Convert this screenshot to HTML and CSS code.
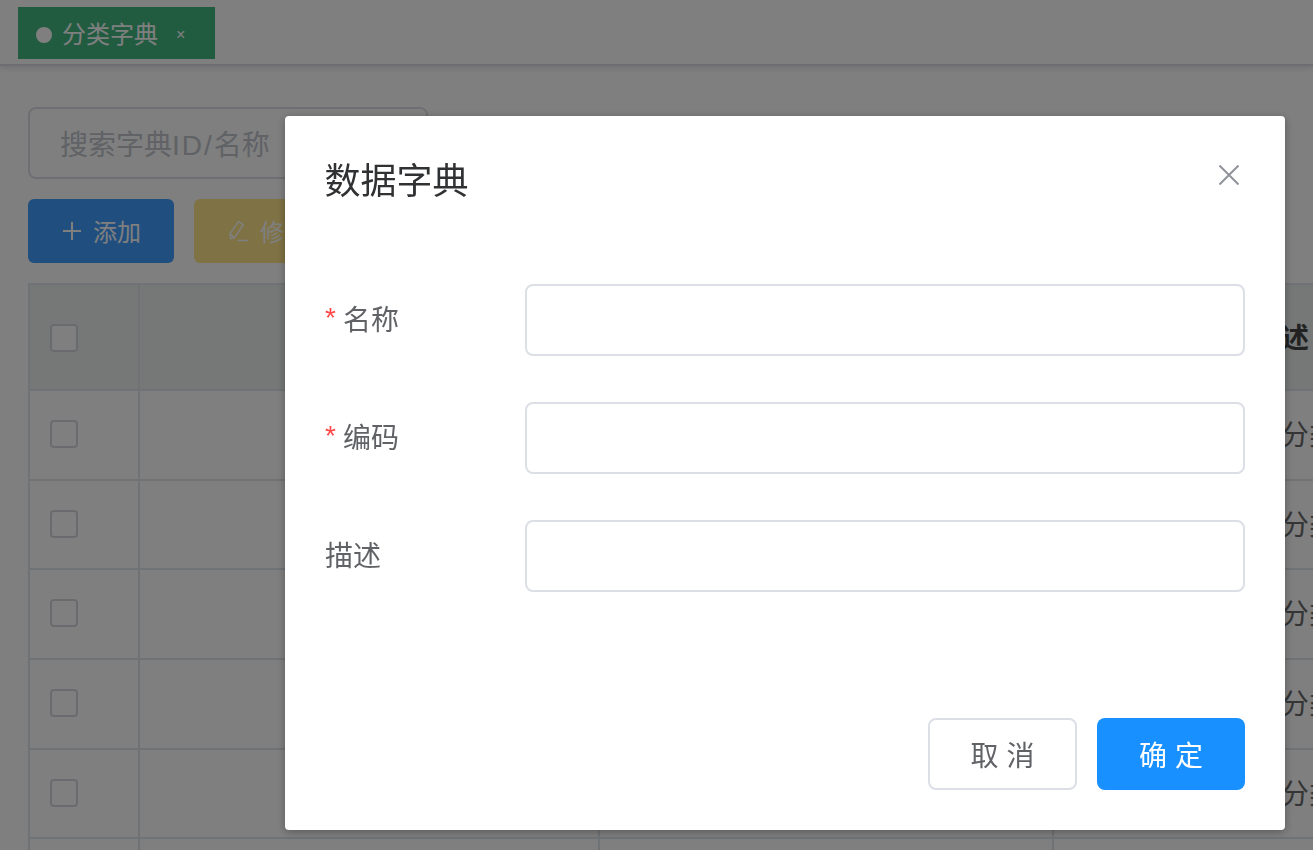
FILE: index.html
```html
<!DOCTYPE html>
<html lang="zh">
<head>
<meta charset="utf-8">
<title>分类字典</title>
<link rel="stylesheet" href="styles.css">
</head>
<body>
<div class="page">
  <header class="tags">
    <div class="tag"><span class="dot"></span><span class="tag-name">分类字典</span><span class="tag-x">×</span></div>
  </header>
  <main class="content">
    <div class="search">搜索字典<span class="latin">ID/</span>名称</div>
    <div class="toolbar">
      <div class="btn btn-add">
        <svg class="ico" viewBox="0 0 20 20"><path d="M10 1v18M1 10h18" fill="none" stroke="currentColor" stroke-width="2"/></svg>
        <span>添加</span>
      </div>
      <div class="btn btn-edit">
        <svg class="ico" viewBox="0 0 22 24"><path d="M3 20l-1-5L11 2l5 3.5L7 19zM2 15l5 4M10 22h11" fill="none" stroke="currentColor" stroke-width="1.6"/></svg>
        <span>修改</span>
      </div>
    </div>
    <table class="table">
      <colgroup><col class="c1"><col class="c2"><col class="c3"><col class="c4"></colgroup>
      <thead>
        <tr><th><span class="check"></span></th><th>名称</th><th>编码</th><th>描述</th></tr>
      </thead>
      <tbody>
        <tr class="r1"><td><span class="check"></span></td><td></td><td></td><td>文章分类</td></tr>
        <tr class="r2"><td><span class="check"></span></td><td></td><td></td><td>文章分类</td></tr>
        <tr class="r1"><td><span class="check"></span></td><td></td><td></td><td>文章分类</td></tr>
        <tr class="r1"><td><span class="check"></span></td><td></td><td></td><td>文章分类</td></tr>
        <tr class="r2"><td><span class="check"></span></td><td></td><td></td><td>文章分类</td></tr>
        <tr class="r3"><td><span class="check"></span></td><td></td><td></td><td>文章分类</td></tr>
      </tbody>
    </table>
  </main>
</div>
<div class="overlay">
  <section class="dialog">
    <div class="dialog-head">
      <h2 class="dialog-title">数据字典</h2>
      <svg class="dialog-close" viewBox="0 0 20 20"><path d="M0.5 0.5l19 19M19.5 0.5l-19 19" fill="none" stroke="currentColor" stroke-width="2"/></svg>
    </div>
    <form class="form">
      <div class="field"><label class="label"><i class="req">*</i>名称</label><div class="input"></div></div>
      <div class="field"><label class="label"><i class="req">*</i>编码</label><div class="input"></div></div>
      <div class="field"><label class="label">描述</label><div class="input"></div></div>
    </form>
    <div class="dialog-foot">
      <div class="dbtn dbtn-cancel">取 消</div>
      <div class="dbtn dbtn-ok">确 定</div>
    </div>
  </section>
</div>
</body>
</html>
```
FILE: styles.css
```css
* { box-sizing: border-box; }
html, body { margin: 0; height: 100%; }
body {
  overflow: hidden;
  background: #fff;
  font-family: "Liberation Sans", "Noto Sans CJK SC", sans-serif;
  color: #606266;
}
.page { height: 850px; overflow: hidden; }
.tags {
  height: 66px;
  padding: 7px 18px;
  background: #fff;
  border-bottom: 2px solid #d8dce5;
  box-shadow: 0 2px 6px rgba(0,0,0,.12);
}
.tag {
  display: flex;
  align-items: center;
  width: 197px;
  height: 52px;
  padding: 4px 0 0 18px;
  background: #42b983;
  color: #fff;
  font-size: 24px;
}
.dot { width: 16px; height: 16px; border-radius: 50%; background: #fff; margin-right: 10px; }
.tag-name { line-height: 48px; }
.tag-x { margin-left: 18px; font-size: 16px; line-height: 48px; }
.content { padding: 41px 28px 0; }
.search {
  width: 400px;
  height: 72px;
  padding-left: 30px;
  border: 2px solid #dcdfe6;
  border-radius: 8px;
  color: #c0c4cc;
  font-size: 28px;
  line-height: 74px;
}
.latin { letter-spacing: 2px; }
.toolbar { display: flex; gap: 20px; margin-top: 20px; }
.btn {
  display: flex;
  align-items: center;
  gap: 11px;
  width: 146px;
  height: 64px;
  padding-left: 34px;
  border-radius: 6px;
  color: #fff;
  font-size: 24px;
}
.btn span { padding-bottom: 2px; }
.btn-add { background: #409eff; }
.btn-edit { background: #ffe488; width: 200px; }
.ico { width: 20px; height: 20px; flex: none; }
.btn-edit .ico { width: 21px; height: 24px; }
.table {
  width: 1480px;
  margin-top: 20px;
  border-collapse: collapse;
  table-layout: fixed;
  font-size: 28px;
}
.c1 { width: 110px; }
.c2 { width: 460px; }
.c3 { width: 454px; }
.c4 { width: 456px; }
.table th, .table td { border: 2px solid #dfe6ec; padding: 0; text-align: center; }
.table th { height: 106px; padding-bottom: 2px; background: #ebf0ed; color: #444; font-weight: 700; }
.table td { padding-bottom: 4px; color: #6a6a6a; }
.table th:first-child { padding: 2px 0 0 20px; text-align: left; }
.table td:first-child { padding: 0 0 2px 20px; text-align: left; }
.r1 td { height: 90px; }
.r2 td { height: 89px; }
.r3 td { height: 91px; }
.check {
  display: block;
  width: 28px;
  height: 28px;
  border: 2px solid #d4d7de;
  border-radius: 4px;
  background: #fff;
}
.overlay {
  position: fixed;
  inset: 0;
  background: rgba(0,0,0,.5);
}
.dialog {
  position: absolute;
  left: 285px;
  top: 116px;
  width: 1000px;
  height: 714px;
  display: flex;
  flex-direction: column;
  padding: 0 40px;
  background: #fff;
  border-radius: 4px;
  box-shadow: 0 2px 8px rgba(0,0,0,.3);
}
.dialog-head {
  display: flex;
  justify-content: space-between;
  height: 168px;
  padding-top: 38px;
}
.dialog-title { margin: 2px 0 0 -0.5px; font-size: 36px; font-weight: 400; line-height: 52px; color: #303133; }
.dialog-close { width: 20px; height: 20px; margin: 11px 6px 0 0; color: #909399; }
.form { display: flex; flex-direction: column; gap: 46px; }
.field { display: flex; align-items: center; height: 72px; }
.label { width: 200px; padding-top: 2px; font-size: 28px; line-height: 40px; color: #606266; }
.req { margin-right: 7px; font-style: normal; line-height: 0; vertical-align: 3px; color: #ff4949; }
.input { width: 720px; height: 72px; border: 2px solid #dcdfe6; border-radius: 8px; background: #fff; }
.dialog-foot {
  display: flex;
  justify-content: flex-end;
  gap: 20px;
  margin-top: 126px;
}
.dbtn {
  width: 149px;
  height: 72px;
  border-radius: 8px;
  text-align: center;
  font-size: 28px;
  line-height: 78px;
}
.dbtn-cancel { border: 2px solid #dcdfe6; line-height: 74px; color: #606266; }
.dbtn-ok { width: 148px; background: #1890ff; color: #fff; }
```
